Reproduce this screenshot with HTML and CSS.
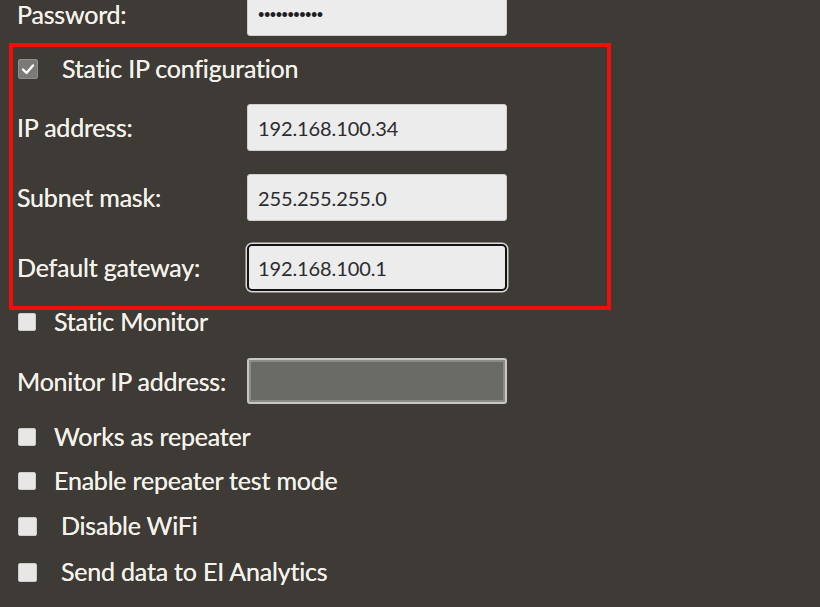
FILE: index.html
```html
<!DOCTYPE html>
<html>
<head>
<meta charset="utf-8">
<link rel="stylesheet" href="styles.css">
</head>
<body>
<div class="form">
  <div class="row row-pass">
    <span class="label">Password:</span>
    <div class="input pass">•••••••••••</div>
  </div>

  <div class="highlight">
    <div class="check-row first">
      <span class="cb checked"><svg width="14" height="12" viewBox="0 0 14 12"><path d="M2 6.5 L5.5 10 L12 2.5" fill="none" stroke="#fff" stroke-width="2.4" stroke-linecap="round" stroke-linejoin="round"/></svg></span>
      <span class="cb-text wide">Static IP configuration</span>
    </div>
    <div class="row field first-field">
      <span class="label">IP address:</span>
      <div class="input">192.168.100.34</div>
    </div>
    <div class="row field">
      <span class="label">Subnet mask:</span>
      <div class="input">255.255.255.0</div>
    </div>
    <div class="row field">
      <span class="label">Default gateway:</span>
      <div class="input focused">192.168.100.1</div>
    </div>
  </div>

  <div class="outside">
    <div class="check-row monitor">
      <span class="cb"></span>
      <span class="cb-text">Static Monitor</span>
    </div>
    <div class="row field monitor-ip">
      <span class="label">Monitor IP address:</span>
      <div class="input disabled"></div>
    </div>
    <div class="check-row r1">
      <span class="cb"></span>
      <span class="cb-text">Works as repeater</span>
    </div>
    <div class="check-row r2">
      <span class="cb"></span>
      <span class="cb-text">Enable repeater test mode</span>
    </div>
    <div class="check-row r3">
      <span class="cb big"></span>
      <span class="cb-text wide">Disable WiFi</span>
    </div>
    <div class="check-row r4">
      <span class="cb big"></span>
      <span class="cb-text wide">Send data to EI Analytics</span>
    </div>
  </div>
</div>
</body>
</html>
```

FILE: styles.css
```css
html, body {
  margin: 0;
  padding: 0;
  background: #3e3b37;
  width: 820px;
  height: 607px;
  overflow: hidden;
}

body {
  font-family: "Lato", "Liberation Sans", sans-serif;
  color: #f4f1ea;
}

.form {
  padding-left: 9px;
  margin-top: -11px;
}

.row {
  display: flex;
  align-items: center;
}

.label {
  width: 230px;
  font-size: 25px;
  line-height: 1;
  flex: none;
  letter-spacing: -0.2px;
  text-shadow: 0 0 0.6px #f4f1ea;
}

.row-pass {
  padding-left: 8px;
  height: 47px;
}

.row-pass .label {
  position: relative;
  top: 2px;
}

.input {
  box-sizing: border-box;
  width: 260px;
  height: 47px;
  background: #ececec;
  border: 1px solid #cfcfcf;
  border-radius: 3px;
  color: #2b2b2f;
  font-family: "Lato", "Liberation Sans", sans-serif;
  font-size: 20px;
  letter-spacing: -0.1px;
  display: flex;
  align-items: center;
  padding-left: 10px;
}

.input.pass {
  font-size: 11px;
  letter-spacing: -0.5px;
  font-weight: bold;
  color: #1e1e22;
  padding-top: 2px;
}

.input.focused {
  border: 2px solid #141414;
  border-radius: 5px;
  box-shadow: 0 0 0 1.5px #d9d9d9;
  padding-left: 9px;
}

.input.disabled {
  background: #6b6b66;
  border: 2px solid #c7c7c2;
  box-shadow: inset 0 0 0 2px #8c8c87;
}

.highlight {
  box-sizing: border-box;
  width: 602px;
  margin-top: 7px;
  border: 4px solid #f20d0d;
  padding: 0 4px 15px 4px;
}

.check-row {
  display: flex;
  align-items: center;
  height: 24px;
}

.check-row.first {
  height: 44px;
  padding-left: 1px;
}

.field.first-field {
  margin-top: 13px;
}

.field {
  margin-top: 23px;
}

.cb {
  box-sizing: border-box;
  flex: none;
  width: 18px;
  height: 18px;
  background: #e8e7e5;
  border: 1px solid #cfcdc9;
  border-radius: 2px;
  margin-left: 1px;
}

.cb.big {
  width: 19px;
  height: 19px;
}

.cb.checked {
  width: 20px;
  height: 20px;
  margin-left: 0;
  background: #7b7a78;
  border: 1px solid #8f8e8c;
  display: flex;
  align-items: center;
  justify-content: center;
}

.cb-text {
  font-size: 25px;
  line-height: 1;
  margin-left: 18px;
  padding-bottom: 2px;
  letter-spacing: -0.2px;
  text-shadow: 0 0 0.6px #f4f1ea;
}

.cb-text.wide {
  margin-left: 24px;
}

.outside {
  padding-left: 8px;
}

.check-row.monitor {
  height: 24px;
}

.monitor-ip {
  margin-top: 24px;
  height: 46px;
}

.monitor-ip .input {
  height: 46px;
}

.r1 { margin-top: 21px; }
.r2 { margin-top: 20px; }
.r3 { margin-top: 21px; }
.r4 { margin-top: 22px; }
```
